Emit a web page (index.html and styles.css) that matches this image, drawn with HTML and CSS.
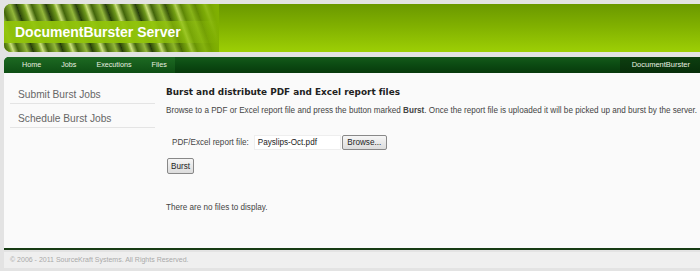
FILE: index.html
```html
<!DOCTYPE html>
<html lang="en">

<head>
    <meta charset="UTF-8">
    <meta name="viewport" content="width=device-width, initial-scale=1.0">
    <title>DocumentBurster Server</title>
    <link rel="stylesheet" href="styles.css">
</head>

<body>
    <div class="page">
        <div class="banner">
            <div class="banner-art"></div>
            <h1 class="banner-title">DocumentBurster Server</h1>
        </div>

        <div class="nav">
            <ul class="nav-menu">
                <li><a href="#">Home</a></li>
                <li><a href="#">Jobs</a></li>
                <li><a href="#">Executions</a></li>
                <li><a href="#">Files</a></li>
            </ul>
            <div class="nav-brand">DocumentBurster</div>
        </div>

        <div class="content">
            <ul class="sidebar">
                <li><a href="#">Submit Burst Jobs</a></li>
                <li><a href="#">Schedule Burst Jobs</a></li>
            </ul>

            <div class="main">
                <h2>Burst and distribute PDF and Excel report files</h2>
                <p class="intro">Browse to a PDF or Excel report file and press the button marked <b>Burst</b>. Once the report file is uploaded it will be picked up and burst by the server.</p>

                <form class="upload-form">
                    <div class="file-row">
                        <label for="reportFile">PDF/Excel report file:</label>
                        <span class="file-input">Payslips-Oct.pdf</span>
                        <button type="button" class="btn btn-browse">Browse...</button>
                    </div>
                    <button type="submit" class="btn btn-burst">Burst</button>
                </form>

                <p class="empty">There are no files to display.</p>
            </div>
        </div>

        <div class="footer">&copy; 2006 - 2011 SourceKraft Systems. All Rights Reserved.</div>
    </div>
</body>

</html>
```

FILE: styles.css
```css
body {
    margin: 0;
    padding: 4px 0 0 4px;
    background-color: #e3e3e3;
    font-family: "Liberation Sans", Arial, sans-serif;
    font-variant-ligatures: none;
    color: #333;
}

.page {
    width: 696px;
}

/* header banner */
.banner {
    position: relative;
    height: 48px;
    border-radius: 7px 0 0 7px;
    overflow: hidden;
    background: linear-gradient(to bottom, #6a9800 0%, #80b000 45%, #9dcf05 100%);
}

.banner-art {
    position: absolute;
    left: 0;
    top: 0;
    width: 215px;
    height: 48px;
    background:
        linear-gradient(to right, rgba(0, 0, 0, 0) 70%, rgba(128, 176, 0, 1) 100%),
        repeating-linear-gradient(70deg, #2f4a08 0px, #6f9a1c 6px, #c9e07a 9px, #42650a 14px, #93b83a 22px, #21380a 28px);
}

.banner-title {
    position: absolute;
    left: 0;
    top: 17px;
    width: 215px;
    height: 22px;
    margin: 0;
    padding-left: 11px;
    box-sizing: border-box;
    background: linear-gradient(to right, rgba(145, 196, 10, 0.95) 70%, rgba(145, 196, 10, 0) 100%);
    color: #fff;
    font-family: "Liberation Sans", Arial, sans-serif;
    font-size: 14px;
    font-weight: bold;
    line-height: 22px;
}

/* top navigation */
.nav {
    display: flex;
    justify-content: space-between;
    height: 16px;
    margin-top: 5px;
    border-radius: 5px 0 0 0;
    background: linear-gradient(to bottom, #145a1a 0%, #0b4a12 50%, #073a0c 100%);
    overflow: hidden;
}

.nav-menu {
    display: flex;
    margin: 0;
    padding: 0 0 0 8px;
    list-style: none;
    background: linear-gradient(to bottom, #1d6a22, #0e4e14);
}

.nav-menu a,
.nav-brand {
    display: block;
    padding: 0 10px;
    color: #e8f0e0;
    font-size: 7.2px;
    line-height: 16px;
    text-decoration: none;
}

.nav-menu li:last-child a {
    padding-right: 8px;
}

.nav-brand {
    padding: 0 10px 0 12px;
    font-size: 7.5px;
    background: linear-gradient(to bottom, #0d3f10, #082e0a);
}

/* content */
.content {
    display: flex;
    height: 175px;
    background-color: #fafafa;
    border-bottom: 2px solid #173c14;
}

.sidebar {
    flex-shrink: 0;
    width: 145px;
    margin: 7px 0 0 6px;
    padding: 0;
    list-style: none;
}

.sidebar li {
    border-bottom: 1px solid #e4e4e4;
}

.sidebar a {
    display: block;
    padding: 9px 0 2px 8px;
    color: #666;
    font-size: 10.2px;
    line-height: 12px;
    text-decoration: none;
}

.main {
    flex: 1;
    padding: 14px 0 0 11px;
    font-size: 8.15px;
    color: #333;
    white-space: nowrap;
}

h2 {
    margin: 0 0 9px 0;
    font-family: "DejaVu Sans", Verdana, sans-serif;
    font-size: 8.9px;
    font-weight: bold;
    color: #222;
}

.intro {
    margin: 0;
    color: #444;
}

.upload-form {
    margin-top: 20px;
}

.file-row {
    display: flex;
    align-items: center;
    padding-left: 6px;
}

.file-row label {
    margin-right: 5px;
    color: #444;
}

.file-input {
    width: 82px;
    height: 13px;
    padding-left: 3px;
    border: 1px solid #eee;
    background-color: #fff;
    line-height: 13px;
    color: #222;
}

.btn {
    height: 15px;
    padding: 0 6px;
    border: 1px solid #888;
    border-radius: 2px;
    background: linear-gradient(to bottom, #f6f6f6, #dcdcdc);
    font-family: "Liberation Sans", Arial, sans-serif;
    font-size: 8.15px;
    color: #222;
    cursor: pointer;
}

.btn-browse {
    width: 45px;
    margin-left: 1px;
    padding: 0;
}

.btn-burst {
    display: block;
    width: 27px;
    height: 16px;
    margin: 8px 0 0 1px;
    padding: 0;
}

.empty {
    margin: 29px 0 0 0;
    color: #444;
}

/* footer */
.footer {
    height: 16px;
    margin-top: 2px;
    padding-left: 6px;
    background-color: #efefef;
    color: #aaa;
    font-size: 7px;
    line-height: 16px;
}
```
